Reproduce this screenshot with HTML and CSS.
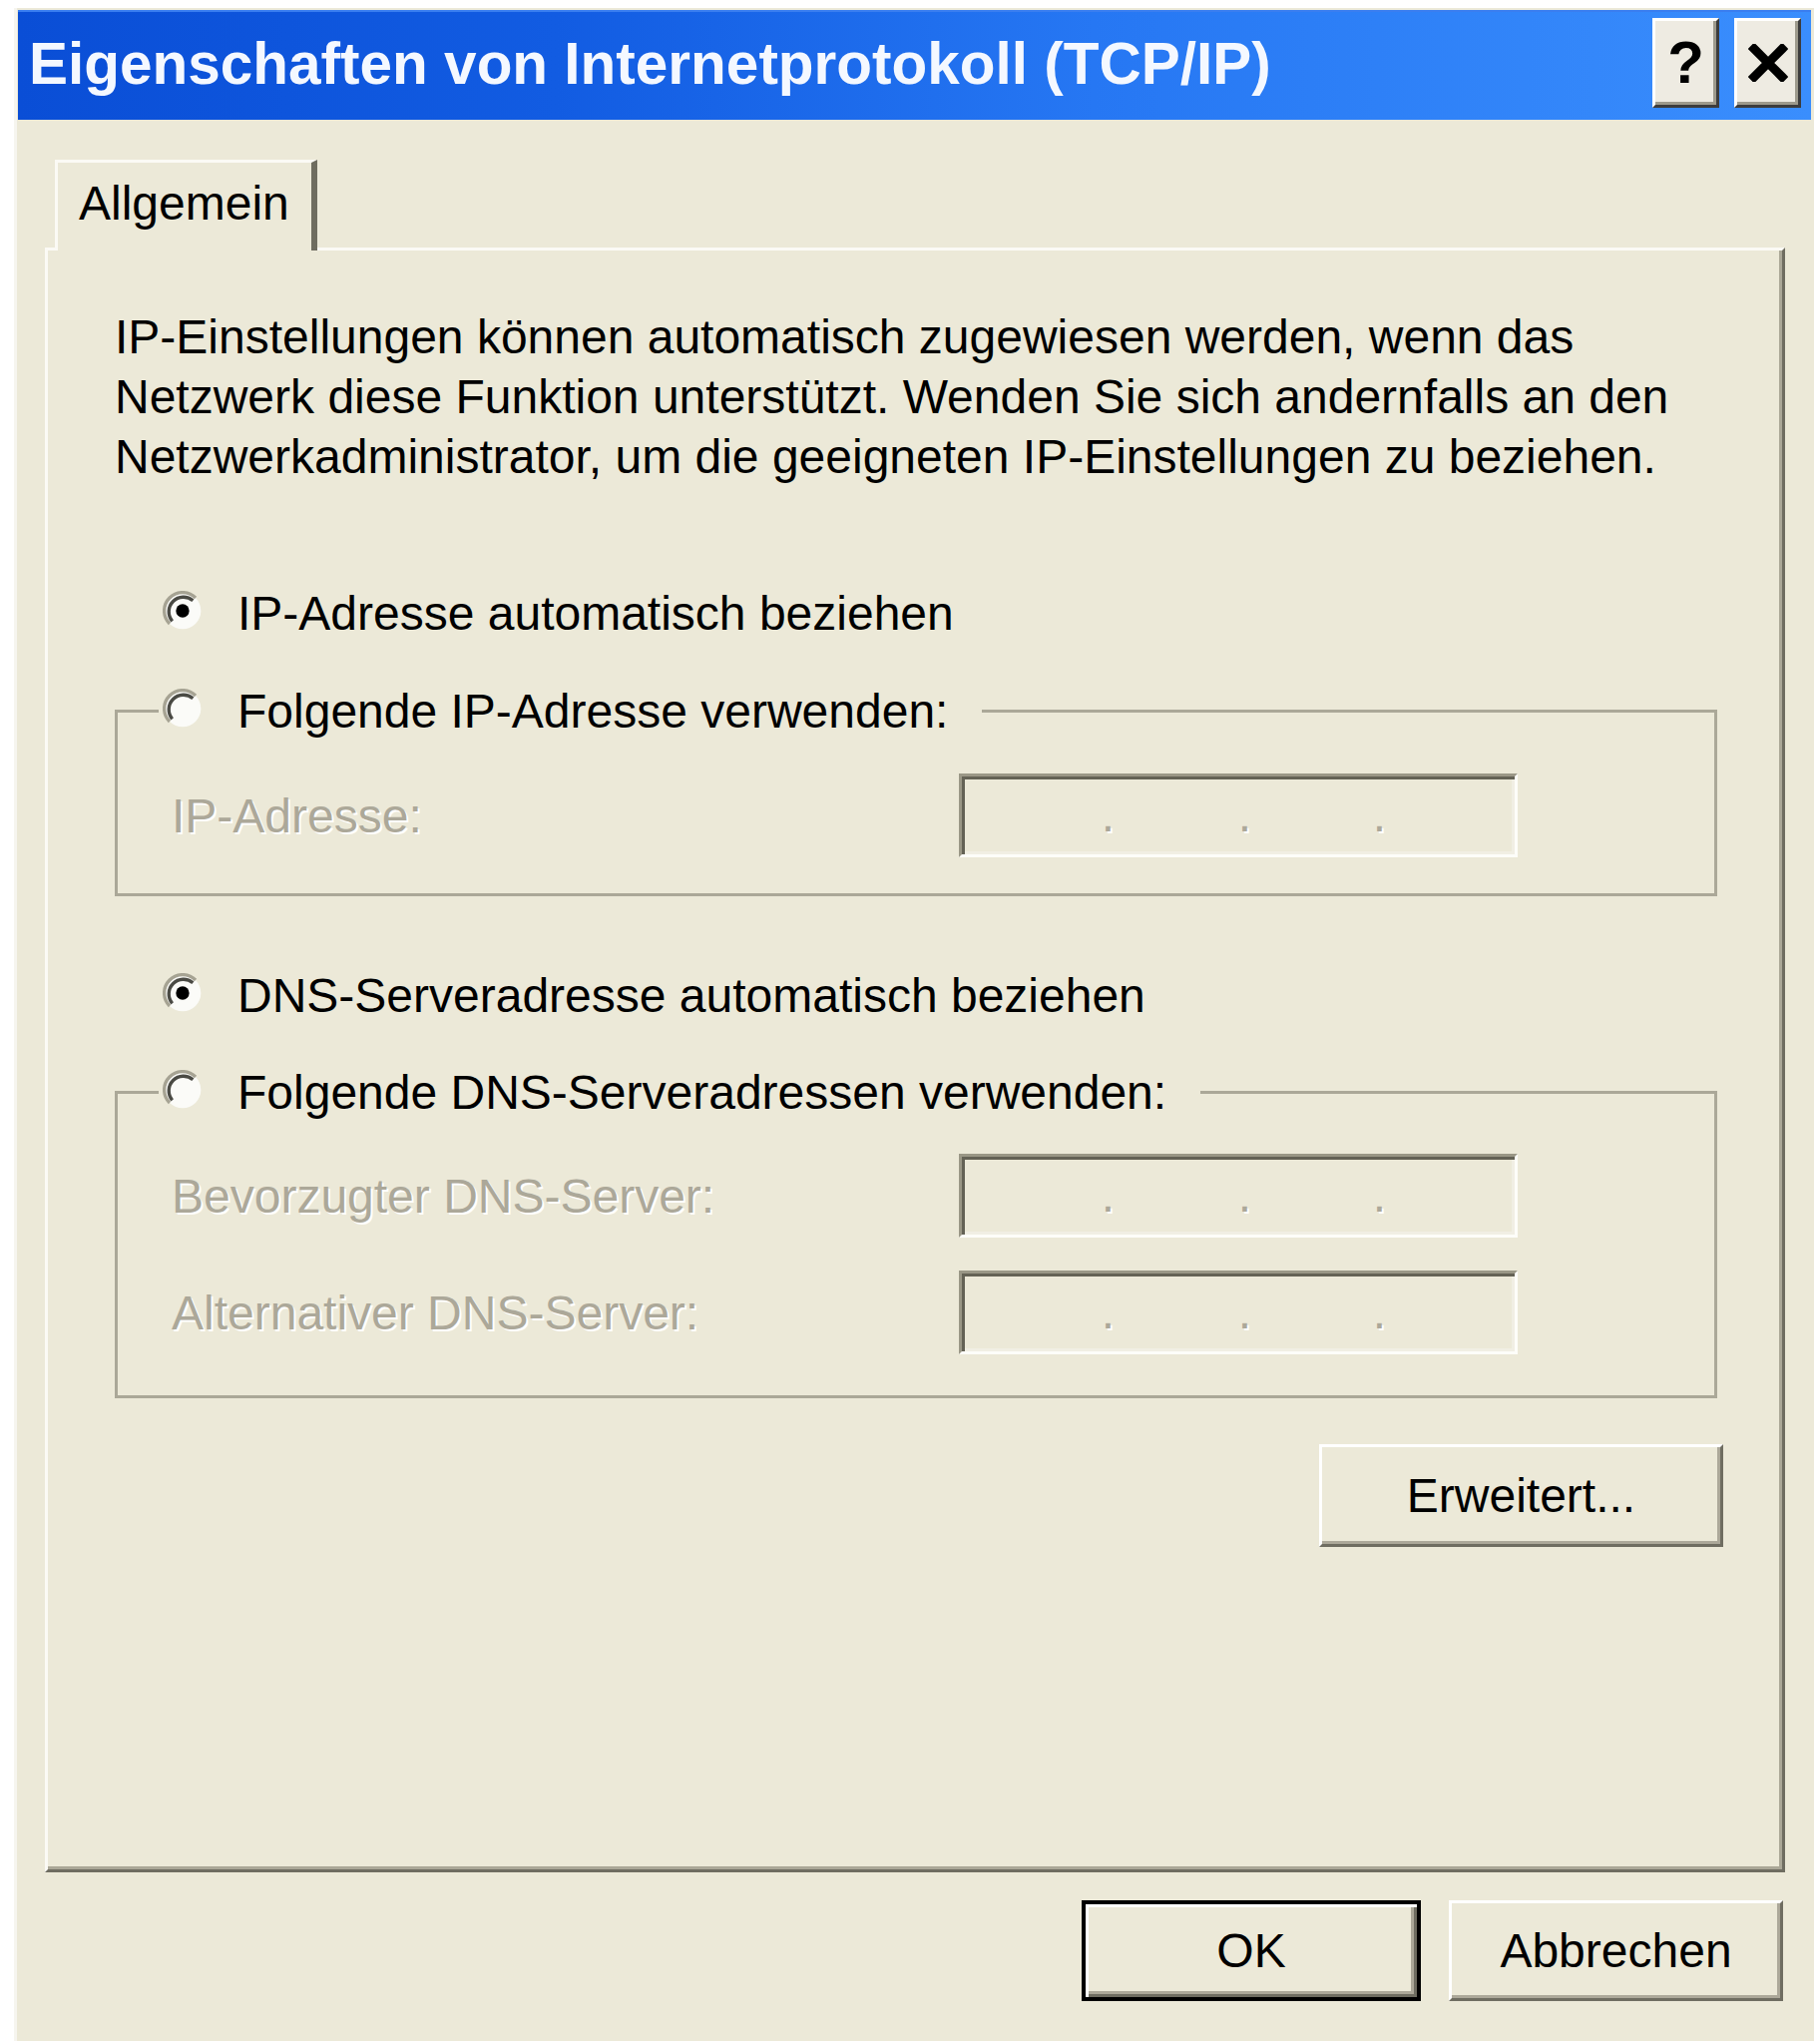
FILE: index.html
```html
<!DOCTYPE html>
<html lang="de">
<head>
<meta charset="utf-8">
<title>Eigenschaften von Internetprotokoll (TCP/IP)</title>
<link rel="stylesheet" href="styles.css">
</head>
<body>
<div class="window">
  <div class="titlebar">
    <span class="title">Eigenschaften von Internetprotokoll (TCP/IP)</span>
    <div class="tb-buttons">
      <span class="tb-btn help">?</span>
      <span class="tb-btn close">
        <svg width="40" height="38" viewBox="0 0 40 38"><path d="M6 5 L34 33 M34 5 L6 33" stroke="#000" stroke-width="9" stroke-linecap="square" fill="none"/></svg>
      </span>
    </div>
  </div>
  <div class="body">
    <div class="tabs"><div class="tab">Allgemein</div></div>
    <div class="panel">
      <p class="desc">IP-Einstellungen können automatisch zugewiesen werden, wenn das<br>Netzwerk diese Funktion unterstützt. Wenden Sie sich andernfalls an den<br>Netzwerkadministrator, um die geeigneten IP-Einstellungen zu beziehen.</p>

      <div class="radio-row">
        <svg class="radio" width="40" height="40" viewBox="0 0 12 12"><circle cx="6" cy="6" r="5.5" fill="#fbfbf8"/><path d="M2.1 9.9 A5.5 5.5 0 0 1 9.9 2.1" stroke="#a6a393" stroke-width="1" fill="none"/><path d="M2.9 9.1 A4.4 4.4 0 0 1 9.1 2.9" stroke="#4a4a44" stroke-width="1" fill="none"/><circle cx="6" cy="6" r="2" fill="#000"/></svg>
        <span>IP-Adresse automatisch beziehen</span>
      </div>

      <fieldset class="group">
        <legend class="legend">
          <svg class="radio" width="40" height="40" viewBox="0 0 12 12"><circle cx="6" cy="6" r="5.5" fill="#fbfbf8"/><path d="M2.1 9.9 A5.5 5.5 0 0 1 9.9 2.1" stroke="#a6a393" stroke-width="1" fill="none"/><path d="M2.9 9.1 A4.4 4.4 0 0 1 9.1 2.9" stroke="#4a4a44" stroke-width="1" fill="none"/></svg>
          <span>Folgende IP-Adresse verwenden:</span>
        </legend>
        <div class="group-body g1">
          <div class="field">
            <span class="lbl">IP-Adresse:</span>
            <div class="ipbox"><span class="seg">.</span><span class="seg">.</span><span class="seg">.</span><span class="seg"></span></div>
          </div>
        </div>
      </fieldset>

      <div class="radio-row r3">
        <svg class="radio" width="40" height="40" viewBox="0 0 12 12"><circle cx="6" cy="6" r="5.5" fill="#fbfbf8"/><path d="M2.1 9.9 A5.5 5.5 0 0 1 9.9 2.1" stroke="#a6a393" stroke-width="1" fill="none"/><path d="M2.9 9.1 A4.4 4.4 0 0 1 9.1 2.9" stroke="#4a4a44" stroke-width="1" fill="none"/><circle cx="6" cy="6" r="2" fill="#000"/></svg>
        <span>DNS-Serveradresse automatisch beziehen</span>
      </div>

      <fieldset class="group g2wrap">
        <legend class="legend">
          <svg class="radio" width="40" height="40" viewBox="0 0 12 12"><circle cx="6" cy="6" r="5.5" fill="#fbfbf8"/><path d="M2.1 9.9 A5.5 5.5 0 0 1 9.9 2.1" stroke="#a6a393" stroke-width="1" fill="none"/><path d="M2.9 9.1 A4.4 4.4 0 0 1 9.1 2.9" stroke="#4a4a44" stroke-width="1" fill="none"/></svg>
          <span>Folgende DNS-Serveradressen verwenden:</span>
        </legend>
        <div class="group-body g2">
          <div class="field">
            <span class="lbl">Bevorzugter DNS-Server:</span>
            <div class="ipbox"><span class="seg">.</span><span class="seg">.</span><span class="seg">.</span><span class="seg"></span></div>
          </div>
          <div class="field">
            <span class="lbl">Alternativer DNS-Server:</span>
            <div class="ipbox"><span class="seg">.</span><span class="seg">.</span><span class="seg">.</span><span class="seg"></span></div>
          </div>
        </div>
      </fieldset>

      <div class="adv-row"><button class="btn adv">Erweitert...</button></div>
    </div>
    <div class="footer">
      <button class="btn default ok">OK</button>
      <button class="btn cancel">Abbrechen</button>
    </div>
  </div>
</div>
</body>
</html>
```

FILE: styles.css
```css
* { box-sizing: border-box; }

body {
  margin: 0;
  background: #ffffff;
  font-family: "Liberation Sans", Arial, sans-serif;
  font-size: 48px;
  color: #000;
}

.window {
  margin: 8px 0 0 14px;
  width: 1804px;
  height: 2037px;
  background: #ece9d8;
  border-left: 3px solid #f6f5ef;
  display: flex;
  flex-direction: column;
}

.titlebar {
  height: 110px;
  margin: 2px 3px 0 1px;
  background: linear-gradient(90deg, #0a4ed6 0%, #125ce2 30%, #2677f3 60%, #3a8efd 100%);
  border-top: 2px solid #3a7ef0;
  display: flex;
  align-items: flex-start;
  justify-content: space-between;
  padding: 0 10px 0 11px;
}

.title {
  align-self: center;
  color: #f4f8ff;
  font-size: 58.5px;
  font-weight: bold;
  white-space: nowrap;
  line-height: 1;
  margin-top: -4px;
}

.tb-buttons {
  display: flex;
  gap: 15px;
  margin-top: 6px;
}

.tb-btn {
  width: 67px;
  height: 90px;
  display: flex;
  align-items: center;
  justify-content: center;
  background: #eeebe2;
  border: 3px solid;
  border-color: #ffffff #3c3c3c #3c3c3c #ffffff;
  box-shadow: inset -3px -3px 0 #9d9a8c;
  font-size: 60px;
  font-weight: bold;
  line-height: 1;
}

.body {
  flex: 1;
  display: flex;
  flex-direction: column;
  padding: 0 29px 0 28px;
}

.tabs {
  margin-top: 40px;
  display: flex;
}

.tab {
  position: relative;
  z-index: 1;
  margin-left: 10px;
  margin-bottom: -3px;
  width: 263px;
  height: 91px;
  background: #ece9d8;
  border-top: 3px solid #fbfaf5;
  border-left: 3px solid #fbfaf5;
  border-right: 6px solid #6f6d60;
  padding: 11px 0 0 21px;
  line-height: 60px;
  white-space: nowrap;
}

.panel {
  height: 1628px;
  border-top: 3px solid #fbfaf5;
  border-left: 3px solid #fbfaf5;
  border-right: 3px solid #6f6d61;
  border-bottom: 3px solid #6f6d61;
  box-shadow: inset -3px -3px 0 #aaa797;
  padding: 57px 65px 0 67px;
  display: flex;
  flex-direction: column;
}

.desc {
  margin: 0;
  line-height: 60px;
  white-space: nowrap;
}

.radio-row {
  margin-top: 96px;
  height: 60px;
  display: flex;
  align-items: center;
  gap: 35px;
  padding-left: 48px;
  white-space: nowrap;
}

.radio-row.r3 { margin-top: 69px; }

.radio { flex: 0 0 auto; display: block; margin-top: -4px; }

.group {
  margin: 38px 0 0;
  padding: 0;
  min-width: 0;
  border: 3px solid #aba898;
}

.group.g2wrap { margin-top: 37px; }

.legend {
  margin-left: 41px;
  padding: 0 34px 0 4px;
  height: 60px;
  display: flex;
  align-items: center;
  gap: 35px;
  white-space: nowrap;
}

.group-body {
  display: flex;
  flex-direction: column;
  gap: 33px;
}

.group-body.g1 { padding: 33px 0 36px; }
.group-body.g2 { padding: 32px 0 41px; }

.field {
  display: flex;
  align-items: center;
  padding-left: 54px;
}

.lbl {
  flex: 0 0 789px;
  color: #aca899;
  text-shadow: 2px 2px 0 #ffffff;
  white-space: nowrap;
}

.ipbox {
  width: 560px;
  height: 84px;
  border: 3px solid;
  border-color: #9a9786 #fdfdf9 #fdfdf9 #9a9786;
  box-shadow: inset 3px 3px 0 #646255, inset -3px -3px 0 #f1efe4;
  display: grid;
  grid-template-columns: 153px 137px 135px 1fr;
  line-height: 78px;
  color: #aca899;
  text-shadow: 2px 2px 0 #ffffff;
}

.seg { text-align: right; }

.adv-row {
  margin-top: 46px;
  display: flex;
  justify-content: flex-end;
  margin-right: -6px;
}

.btn {
  font-family: "Liberation Sans", Arial, sans-serif;
  font-size: 48px;
  color: #000;
  background: #ece9d8;
  border: 3px solid;
  border-color: #ffffff #6f6d61 #6f6d61 #ffffff;
  box-shadow: inset -3px -3px 0 #aca899;
  padding: 0;
  line-height: 1;
}

.btn.adv {
  width: 405px;
  height: 103px;
}

.footer {
  margin-top: 28px;
  display: flex;
  justify-content: flex-end;
  gap: 28px;
  padding-right: 2px;
}

.btn.ok {
  width: 340px;
  height: 101px;
}

.btn.cancel {
  width: 335px;
  height: 101px;
}

.btn.default {
  border: 4px solid #000;
  box-shadow: inset 3px 3px 0 #ffffff, inset -3px -3px 0 #6f6d61, inset -6px -6px 0 #aca899;
}
```
